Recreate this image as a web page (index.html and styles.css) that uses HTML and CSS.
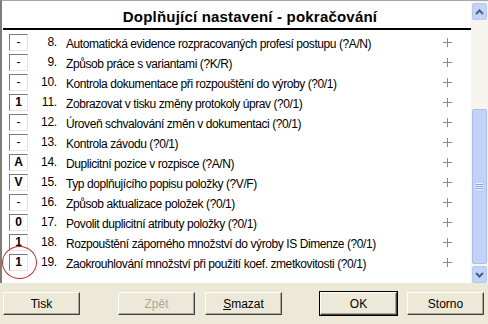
FILE: index.html
```html
<!DOCTYPE html>
<html lang="cs">
    <head>
        <meta charset="UTF-8">
        <meta name="viewport" content="width=device-width, initial-scale=1.0">
        <link rel="stylesheet" href="styles.css">
        <title>Doplňující nastavení</title>
    </head>
    <body>
        <div class="window">
            <div class="content">
                <div class="list">
                    <div class="heading">Doplňující nastavení - pokračování</div>
                    <div class="row"><span class="box">-</span><span class="num">8.</span><span class="label">Automatická evidence rozpracovaných profesí postupu (?A/N)</span><span class="plus"></span></div>
                    <div class="row"><span class="box">-</span><span class="num">9.</span><span class="label">Způsob práce s variantami (?K/R)</span><span class="plus"></span></div>
                    <div class="row"><span class="box">-</span><span class="num">10.</span><span class="label">Kontrola dokumentace při rozpouštění do výroby (?0/1)</span><span class="plus"></span></div>
                    <div class="row"><span class="box bold">1</span><span class="num">11.</span><span class="label">Zobrazovat v tisku změny protokoly úprav (?0/1)</span><span class="plus"></span></div>
                    <div class="row"><span class="box">-</span><span class="num">12.</span><span class="label">Úroveň schvalování změn v dokumentaci (?0/1)</span><span class="plus"></span></div>
                    <div class="row"><span class="box">-</span><span class="num">13.</span><span class="label">Kontrola závodu (?0/1)</span><span class="plus"></span></div>
                    <div class="row"><span class="box bold">A</span><span class="num">14.</span><span class="label">Duplicitní pozice v rozpisce (?A/N)</span><span class="plus"></span></div>
                    <div class="row"><span class="box bold">V</span><span class="num">15.</span><span class="label">Typ doplňujícího popisu položky (?V/F)</span><span class="plus"></span></div>
                    <div class="row"><span class="box">-</span><span class="num">16.</span><span class="label">Způsob aktualizace položek (?0/1)</span><span class="plus"></span></div>
                    <div class="row"><span class="box bold">0</span><span class="num">17.</span><span class="label">Povolit duplicitní atributy položky (?0/1)</span><span class="plus"></span></div>
                    <div class="row"><span class="box bold">1</span><span class="num">18.</span><span class="label">Rozpouštění záporného množství do výroby IS Dimenze (?0/1)</span><span class="plus"></span></div>
                    <div class="row marked"><span class="box bold">1</span><span class="num">19.</span><span class="label">Zaokrouhlování množství při použití koef. zmetkovitosti (?0/1)</span><span class="plus"></span><span class="circle"></span></div>
                </div>
                <div class="scrollbar">
                    <div class="arrow">
                        <svg width="9" height="6" viewBox="0 0 9 6"><path d="M1 5 L4.5 1.5 L8 5" fill="none" stroke="#4d6185" stroke-width="2"/></svg>
                    </div>
                    <div class="track-top"></div>
                    <div class="thumb"><span class="grip"></span></div>
                    <div class="arrow">
                        <svg width="9" height="6" viewBox="0 0 9 6"><path d="M1 1 L4.5 4.5 L8 1" fill="none" stroke="#4d6185" stroke-width="2"/></svg>
                    </div>
                </div>
            </div>
            <div class="buttons">
                <button class="btn">Tisk</button>
                <button class="btn disabled gap-wide">Zpět</button>
                <button class="btn gap-narrow"><u>S</u>mazat</button>
                <button class="btn default gap-wide">OK</button>
                <button class="btn gap-narrow">Storno</button>
            </div>
        </div>
    </body>
</html>
```

FILE: styles.css
```css
html, body {
    margin: 0;
    width: 488px;
    height: 324px;
    overflow: hidden;
}
body {
    font-family: "Liberation Sans", Arial, sans-serif;
    font-size: 12px;
    color: #000;
    background: #ece9d8;
}
.window {
    display: flex;
    flex-direction: column;
    height: 324px;
}
.content {
    display: flex;
    height: 283px;
    border-top: 1px solid #a7a6aa;
    border-left: 2px solid #7f7d74;
    box-sizing: border-box;
    background: #fff;
}
.list {
    position: relative;
    flex: 1;
    padding-left: 1px;
}
.heading {
    height: 27px;
    border-bottom: 2px solid #000;
    font-size: 15px;
    font-weight: bold;
    letter-spacing: 0.2px;
    text-align: center;
    line-height: 31px;
    padding-left: 26px;
}
.row {
    display: flex;
    align-items: center;
    height: 20px;
    position: relative;
}
.heading + .row {
    margin-top: 2px;
}
.box {
    margin-left: 6px;
    width: 17px;
    height: 15px;
    border-top: 1px solid #7a7a7a;
    border-left: 1px solid #7a7a7a;
    border-right: 1px solid #e4e4e4;
    border-bottom: 1px solid #e4e4e4;
    text-align: center;
    line-height: 15px;
    font-size: 12px;
}
.bold {
    font-weight: bold;
}
.num {
    width: 29px;
    text-align: right;
    letter-spacing: -0.2px;
}
.label {
    flex: 1;
    margin-left: 9px;
    padding-top: 3px;
    letter-spacing: -0.42px;
}
.plus {
    width: 9px;
    height: 9px;
    margin-right: 19px;
    background:
        linear-gradient(#8a8a8a, #8a8a8a) center / 9px 1px no-repeat,
        linear-gradient(#8a8a8a, #8a8a8a) center / 1px 9px no-repeat;
}
.circle {
    position: absolute;
    left: -1px;
    top: -6px;
    width: 33px;
    height: 31px;
    border: 1px solid #c0282c;
    border-radius: 50%;
}
.scrollbar {
    width: 17px;
    display: flex;
    flex-direction: column;
    background: #f5f4ef;
    padding-top: 2px;
    box-sizing: border-box;
}
.arrow {
    height: 15px;
    margin: 0 1px;
    border: 1px solid #b6c8f0;
    border-radius: 2px;
    background: #c4d4f8;
    display: flex;
    align-items: center;
    justify-content: center;
}
.track-top {
    height: 89px;
}
.thumb {
    flex: 1;
    margin: 0 1px 2px;
    border: 1px solid #a9bde8;
    border-radius: 2px;
    background: #c1d3fb;
    display: flex;
    align-items: center;
    justify-content: center;
}
.grip {
    width: 7px;
    height: 7px;
    background: repeating-linear-gradient(#eef3ff 0 1px, #8ca4dc 1px 2px);
}
.buttons {
    display: flex;
    padding: 9px 0 0 3px;
}
.btn {
    width: 77px;
    height: 23px;
    padding: 0;
    font-family: "Liberation Sans", Arial, sans-serif;
    font-size: 12px;
    color: #000;
    background: #ece9d8;
    border-top: 1px solid #fff;
    border-left: 1px solid #fff;
    border-right: 1px solid #404040;
    border-bottom: 1px solid #404040;
    box-shadow: inset -1px -1px 0 #aca899;
}
.disabled {
    color: #aca899;
}
.default {
    outline: 1px solid #000;
}
.gap-wide {
    margin-left: 38px;
}
.gap-narrow {
    margin-left: 10px;
}
```
